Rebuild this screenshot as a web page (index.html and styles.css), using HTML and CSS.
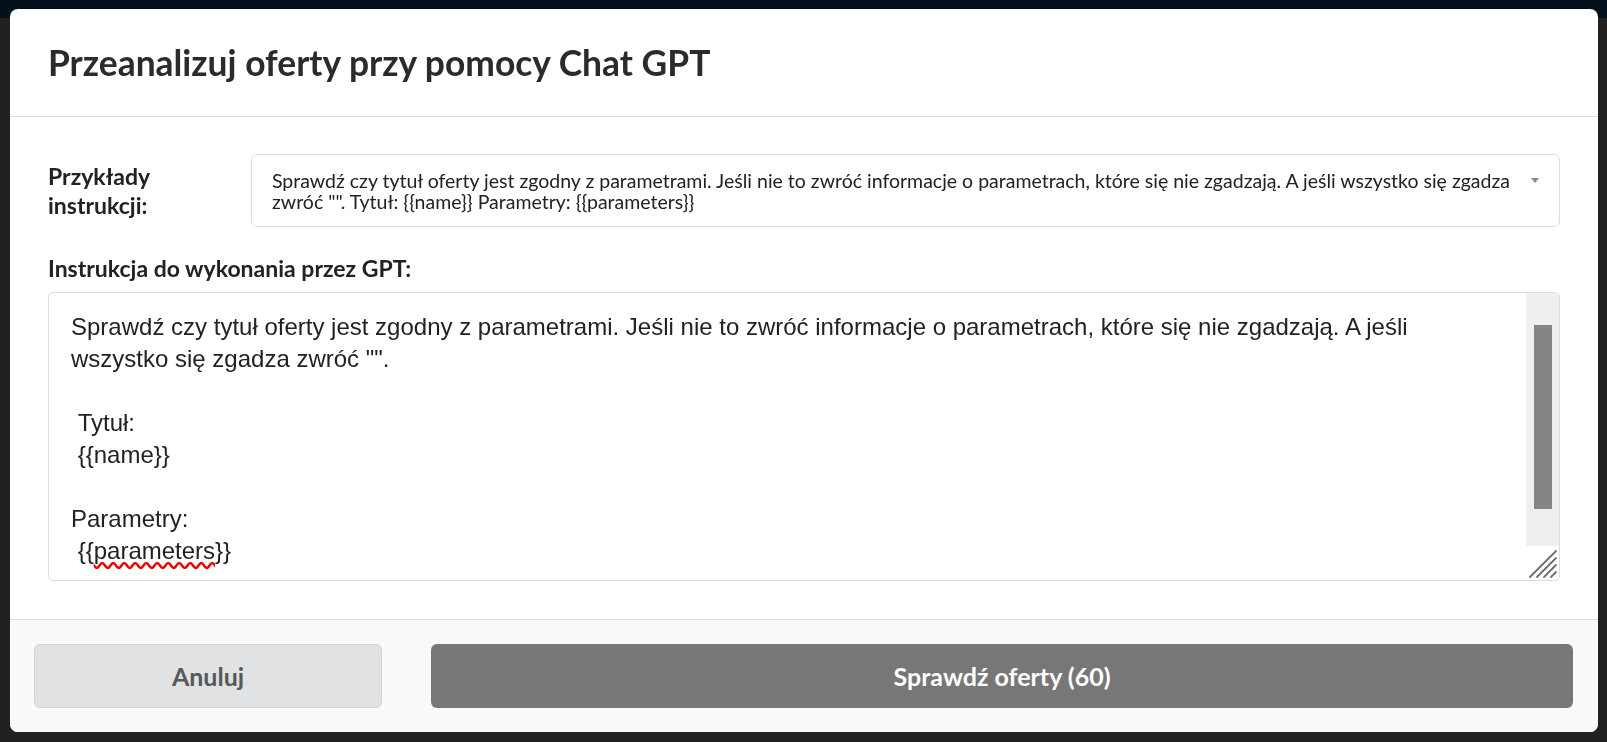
FILE: index.html
```html
<!DOCTYPE html>
<html lang="pl">
<head>
<meta charset="utf-8">
<title>Przeanalizuj oferty przy pomocy Chat GPT</title>
<link rel="stylesheet" href="styles.css">
</head>
<body>
<div class="page">
  <div class="topbar"></div>
</div>
<div class="overlay">
  <div class="modal">
    <header class="modal-header">
      <h1 class="modal-title">Przeanalizuj oferty przy pomocy Chat GPT</h1>
    </header>
    <section class="modal-body">
      <div class="examples-row">
        <div class="field-label examples-label">Przykłady instrukcji:</div>
        <div class="select">
          <span class="select-text">Sprawdź czy tytuł oferty jest zgodny z parametrami. Jeśli nie to zwróć informacje o parametrach, które się nie zgadzają. A jeśli wszystko się zgadza zwróć "". Tytuł: {{name}} Parametry: {{parameters}}</span>
          <span class="select-arrow"></span>
        </div>
      </div>
      <div class="field-label instr-label">Instrukcja do wykonania przez GPT:</div>
      <div class="textbox">
        <div class="textbox-content">Sprawdź czy tytuł oferty jest zgodny z parametrami. Jeśli nie to zwróć informacje o parametrach, które się nie zgadzają. A jeśli wszystko się zgadza zwróć "".

 Tytuł:
 {{name}}

Parametry:
 {{<span class="misspelled">parameters</span>}}</div>
        <div class="scrollbar">
          <div class="scroll-track"><div class="scroll-thumb"></div></div>
          <div class="resizer">
            <svg width="30" height="30" viewBox="0 0 30 30" aria-hidden="true">
              <g stroke="#6e6e6e" stroke-width="1.8" stroke-linecap="round">
                <line x1="2" y1="28" x2="28" y2="2"/>
                <line x1="9" y1="28" x2="28" y2="9"/>
                <line x1="16" y1="28" x2="28" y2="16"/>
                <line x1="23" y1="28" x2="28" y2="23"/>
              </g>
            </svg>
          </div>
        </div>
      </div>
    </section>
    <footer class="modal-footer">
      <button class="btn btn-cancel" type="button">Anuluj</button>
      <button class="btn btn-primary" type="button">Sprawdź oferty (60)</button>
    </footer>
  </div>
</div>
</body>
</html>
```

FILE: styles.css
```css
html, body {
  margin: 0;
  height: 100%;
}

body {
  background: #212121;
  font-family: Lato, "Noto Sans", sans-serif;
  overflow: hidden;
}

.page {
  height: 742px;
}

.topbar {
  height: 18px;
  background: #04111c;
}

.overlay {
  position: fixed;
  inset: 0;
  padding: 9px 9px 10px 10px;
  display: flex;
}

.modal {
  flex: 1;
  background: #fff;
  border-radius: 8px;
  display: flex;
  flex-direction: column;
  overflow: hidden;
}

.modal-header {
  height: 107px;
  flex: none;
  border-bottom: 1px solid #dedede;
  display: flex;
  align-items: center;
  padding: 0 38px;
}

.modal-title {
  margin: 0;
  font-size: 35.4px;
  font-weight: 700;
  color: #2b2b2b;
}

.modal-body {
  flex: 1;
  padding: 37px 38px 38px;
  display: flex;
  flex-direction: column;
}

.examples-row {
  display: flex;
  align-items: center;
}

.field-label {
  font-size: 23px;
  font-weight: 700;
  line-height: 29px;
  color: #222;
}

.examples-label {
  width: 203px;
  flex: none;
}

.select {
  flex: 1;
  position: relative;
  height: 73px;
  box-sizing: border-box;
  border: 1px solid #ddd;
  border-radius: 6px;
  display: flex;
  align-items: center;
  padding: 0 34px 0 20px;
}

.select-text {
  font-size: 19.5px;
  line-height: 21px;
  color: #222;
}

.select-arrow {
  position: absolute;
  right: 20px;
  top: 23px;
  width: 0;
  height: 0;
  border-left: 4.5px solid transparent;
  border-right: 4.5px solid transparent;
  border-top: 5px solid #8a8a8a;
}

.instr-label {
  margin: 27px 0 9px;
}

.textbox {
  height: 289px;
  box-sizing: border-box;
  border: 1px solid #ddd;
  border-radius: 5px;
  display: flex;
  overflow: hidden;
}

.textbox-content {
  flex: 1;
  padding: 18px 22px;
  font-family: "Liberation Sans", Arial, sans-serif;
  font-size: 24px;
  line-height: 32px;
  color: #222;
  white-space: pre-wrap;
  overflow: hidden;
}

.misspelled {
  text-decoration: underline wavy #e00;
  text-decoration-skip-ink: none;
  text-underline-offset: 3px;
}

.scrollbar {
  width: 33px;
  flex: none;
  display: flex;
  flex-direction: column;
}

.scroll-track {
  flex: 1;
  background: #efefef;
  padding: 32px 7px 37px 8px;
  display: flex;
}

.scroll-thumb {
  flex: 1;
  background: #858585;
}

.resizer {
  height: 34px;
  flex: none;
  display: flex;
  align-items: flex-end;
  justify-content: flex-end;
}

.resizer svg {
  display: block;
  margin: 0 1px 1px 0;
}

.modal-footer {
  flex: none;
  background: #f8f9fa;
  border-top: 1px solid #dcdcdc;
  padding: 24px 25px 24px 24px;
  display: flex;
  gap: 49px;
}

.btn {
  height: 64px;
  border-radius: 6px;
  font-family: Lato, "Noto Sans", sans-serif;
  font-size: 25px;
  font-weight: 700;
  cursor: pointer;
}

.btn-cancel {
  width: 348px;
  flex: none;
  background: #e1e2e4;
  border: 1px solid #d3d4d6;
  color: #585858;
}

.btn-primary {
  flex: 1;
  background: #777;
  border: none;
  color: #fff;
}
```
